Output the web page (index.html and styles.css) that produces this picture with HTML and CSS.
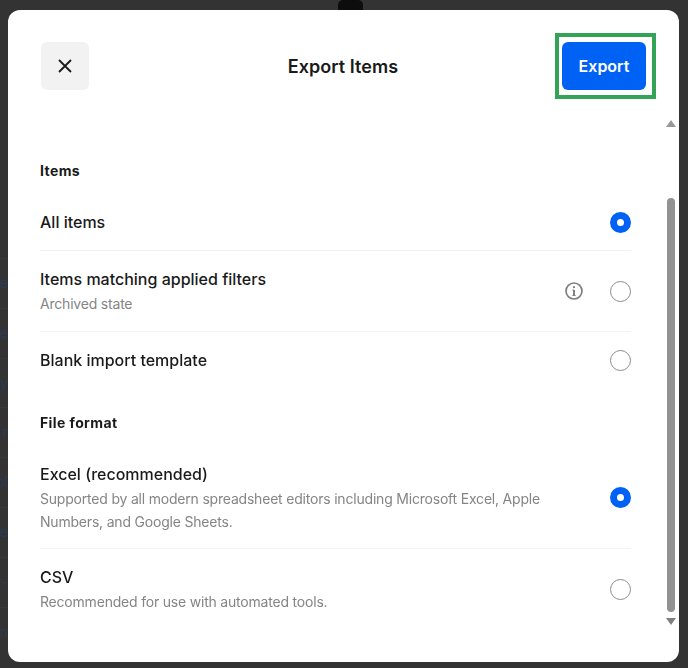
FILE: index.html
```html
<!DOCTYPE html>
<html lang="en">
<head>
    <meta charset="UTF-8">
    <meta name="viewport" content="width=device-width, initial-scale=1.0">
    <title>Export Items</title>
    <link rel="stylesheet" href="styles.css">
</head>
<body>
    <!-- Page behind the dialog, only the last letters show -->
    <div class="backdrop">
        <div class="backdrop-notch"></div>
        <div class="backdrop-list">
            <div class="backdrop-row">e</div>
            <div class="backdrop-row">e</div>
            <div class="backdrop-row">y</div>
            <div class="backdrop-row">r</div>
            <div class="backdrop-row">pl</div>
            <div class="backdrop-row">e</div>
            <div class="backdrop-row">r-</div>
            <div class="backdrop-row">n</div>
        </div>
    </div>

    <!-- Export dialog -->
    <div class="modal">
        <header class="modal-header">
            <button class="close-button" aria-label="Close">
                <svg width="16" height="16" viewBox="0 0 16 16" fill="none" stroke="#1a1a1a" stroke-width="1.8">
                    <path d="M2 2 L14 14 M14 2 L2 14"/>
                </svg>
            </button>
            <h1 class="modal-title">Export Items</h1>
            <button class="export-button">Export</button>
            <div class="highlight"></div>
        </header>

        <div class="modal-body">
            <div class="modal-content">
                <h2 class="group-title">Items</h2>
                <div class="option">
                    <div class="option-text">
                        <div class="option-label">All items</div>
                    </div>
                    <span class="radio checked"></span>
                </div>
                <div class="option">
                    <div class="option-text">
                        <div class="option-label">Items matching applied filters</div>
                        <div class="option-note">Archived state</div>
                    </div>
                    <svg class="info-icon" width="18" height="18" viewBox="0 0 18 18" fill="none" stroke="#808080">
                        <circle cx="9" cy="9" r="8" stroke-width="1.7"/>
                        <path d="M9 8 V13.5" stroke-width="2"/>
                        <path d="M7.4 8 H9 M7.4 13.5 H10.6" stroke-width="1.1"/>
                        <circle cx="9" cy="5.2" r="1.1" fill="#808080" stroke="none"/>
                    </svg>
                    <span class="radio"></span>
                </div>
                <div class="option">
                    <div class="option-text">
                        <div class="option-label">Blank import template</div>
                    </div>
                    <span class="radio"></span>
                </div>

                <h2 class="group-title second">File format</h2>
                <div class="option">
                    <div class="option-text">
                        <div class="option-label">Excel (recommended)</div>
                        <div class="option-note two-line">Supported by all modern spreadsheet editors including Microsoft Excel, Apple Numbers, and Google Sheets.</div>
                    </div>
                    <span class="radio checked"></span>
                </div>
                <div class="option">
                    <div class="option-text">
                        <div class="option-label">CSV</div>
                        <div class="option-note">Recommended for use with automated tools.</div>
                    </div>
                    <span class="radio"></span>
                </div>
            </div>

            <div class="scrollbar">
                <span class="arrow-up"></span>
                <div class="scroll-thumb"></div>
                <span class="arrow-down"></span>
            </div>
        </div>
    </div>
</body>
</html>
```

FILE: styles.css
```css
* {
    box-sizing: border-box;
}

html, body {
    height: 100%;
}

body {
    margin: 0;
    background: #333333;
    font-family: Inter, "Liberation Sans", sans-serif;
    color: #1a1a1a;
    overflow: hidden;
}

/* Page behind the dialog */
.backdrop {
    height: 100%;
}

.backdrop-notch {
    position: absolute;
    top: 0;
    left: 338px;
    width: 25px;
    height: 10px;
    background: #0d0d0d;
    border-radius: 5px 5px 0 0;
}

.backdrop-list {
    width: 8px;
    padding-top: 258px;
    overflow: hidden;
}

.backdrop-row {
    display: flex;
    justify-content: flex-end;
    height: 49.8px;
    padding-top: 14px;
    font-size: 14px;
    line-height: 20px;
    color: #2b3a55;
    white-space: nowrap;
    border-top: 1px solid #383838;
}

/* Dialog */
.modal {
    position: fixed;
    top: 9.5px;
    left: 8px;
    width: 670.5px;
    height: 652.5px;
    display: flex;
    flex-direction: column;
    background: #fff;
    border-radius: 12px;
}

.modal-header {
    position: relative;
    flex: none;
    display: grid;
    grid-template-columns: 1fr auto 1fr;
    align-items: center;
    height: 104.5px;
    padding: 32.5px 32.5px 24px 32px;
}

.modal-title {
    margin: 2px 0 0;
    font-size: 18px;
    line-height: 24px;
    font-weight: 600;
    letter-spacing: 0.05px;
}

.close-button {
    display: flex;
    align-items: center;
    justify-content: center;
    width: 48px;
    height: 48px;
    margin-left: 1px;
    padding: 0;
    background: #f2f2f2;
    border: none;
    border-radius: 6px;
}

.export-button {
    justify-self: end;
    width: 84px;
    height: 48px;
    padding: 0;
    background: #0062f5;
    color: #fff;
    border: none;
    border-radius: 6px;
    font-family: inherit;
    font-size: 16px;
    font-weight: 600;
}

/* Green box drawn over the screenshot */
.highlight {
    position: absolute;
    top: 23.5px;
    right: 22.5px;
    width: 101px;
    height: 66px;
    border: 4px solid #33a457;
}

.modal-body {
    flex: 1;
    min-height: 0;
    display: flex;
}

.modal-content {
    flex: 1;
    min-width: 0;
    padding: 47px 32.5px 0 32px;
}

.group-title {
    margin: 0 0 13px;
    font-size: 14px;
    line-height: 20px;
    font-weight: 700;
    letter-spacing: 0.4px;
}

.group-title.second {
    margin-top: 25px;
}

.option {
    display: flex;
    align-items: center;
    padding: 16px 0;
    border-bottom: 1px solid #f2f2f2;
}

.option:last-child,
.option:has(+ .group-title) {
    border-bottom: none;
}

.option-text {
    flex: 1;
    min-width: 0;
}

.option-label {
    font-size: 16px;
    line-height: 24px;
    font-weight: 500;
}

.option-note {
    max-width: 510px;
    margin-top: 1px;
    font-size: 14px;
    line-height: 23px;
    letter-spacing: -0.2px;
    color: #858585;
}

.option-note.two-line {
    margin-bottom: -1px;
}

.info-icon {
    flex: none;
    margin-right: 27px;
}

.radio {
    flex: none;
    width: 21px;
    height: 21px;
    background: #fff;
    border: 1.7px solid #8c8c8c;
    border-radius: 50%;
}

.radio.checked {
    background: #fff;
    border: 7.5px solid #0062f5;
}

/* Scrollbar */
.scrollbar {
    flex: none;
    width: 15px;
    height: 518px;
    display: flex;
    flex-direction: column;
    align-items: center;
    padding-top: 6px;
}

.arrow-up,
.arrow-down {
    flex: none;
    width: 0;
    height: 0;
    border-left: 5px solid transparent;
    border-right: 5px solid transparent;
}

.arrow-up {
    border-bottom: 7px solid #999;
}

.arrow-down {
    border-top: 7px solid #808080;
    margin-top: 6px;
}

.scroll-thumb {
    flex: none;
    width: 8px;
    height: 414px;
    margin-top: 71px;
    background: #929292;
    border-radius: 4px;
}
```
